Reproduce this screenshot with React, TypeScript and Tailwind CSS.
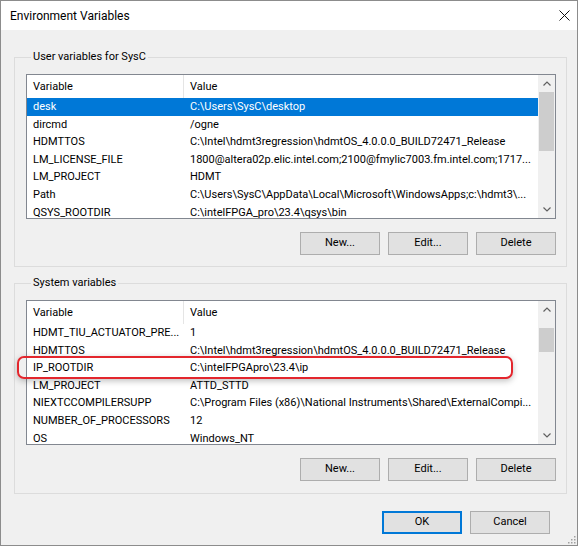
import React from 'react';

type Row = { name: string; value: string };

const userRows: Row[] = [
  { name: 'desk', value: 'C:\\Users\\SysC\\desktop' },
  { name: 'dircmd', value: '/ogne' },
  { name: 'HDMTTOS', value: 'C:\\Intel\\hdmt3regression\\hdmtOS_4.0.0.0_BUILD72471_Release' },
  { name: 'LM_LICENSE_FILE', value: '1800@altera02p.elic.intel.com;2100@fmylic7003.fm.intel.com;1717...' },
  { name: 'LM_PROJECT', value: 'HDMT' },
  { name: 'Path', value: 'C:\\Users\\SysC\\AppData\\Local\\Microsoft\\WindowsApps;c:\\hdmt3\\...' },
  { name: 'QSYS_ROOTDIR', value: 'C:\\intelFPGA_pro\\23.4\\qsys\\bin' },
];

const systemRows: Row[] = [
  { name: 'HDMT_TIU_ACTUATOR_PRE...', value: '1' },
  { name: 'HDMTTOS', value: 'C:\\Intel\\hdmt3regression\\hdmtOS_4.0.0.0_BUILD72471_Release' },
  { name: 'IP_ROOTDIR', value: 'C:\\intelFPGApro\\23.4\\ip' },
  { name: 'LM_PROJECT', value: 'ATTD_STTD' },
  { name: 'NIEXTCCOMPILERSUPP', value: 'C:\\Program Files (x86)\\National Instruments\\Shared\\ExternalCompi...' },
  { name: 'NUMBER_OF_PROCESSORS', value: '12' },
  { name: 'OS', value: 'Windows_NT' },
];

function Chevron({ up }: { up?: boolean }) {
  return (
    <svg width="8" height="5" viewBox="0 0 8 5">
      <path
        d={up ? 'M0.5 4.5 L4 1 L7.5 4.5' : 'M0.5 0.5 L4 4 L7.5 0.5'}
        fill="none"
        stroke="#606060"
        strokeWidth="1.2"
      />
    </svg>
  );
}

function WinButton({ children, primary }: { children: React.ReactNode; primary?: boolean }) {
  return (
    <button
      className={`w-[80px] h-[23px] bg-[#e1e1e1] text-[11px] text-black ${
        primary ? 'border-2 border-[#0078d7]' : 'border border-[#adadad]'
      }`}
    >
      {children}
    </button>
  );
}

function VarList({
  rows,
  selected,
  thumbTop,
  thumbHeight,
}: {
  rows: Row[];
  selected?: number;
  thumbTop: number;
  thumbHeight: number;
}) {
  return (
    <div className="w-[530px] h-[145px] border border-[#828790] bg-white flex overflow-hidden">
      <div className="flex-1 min-w-0 flex flex-col">
        <div className="h-[23px] flex shrink-0">
          <div className="w-[157px] pl-[6px] pt-[1px] flex items-center border-r border-[#e5e5e5]">Variable</div>
          <div className="flex-1 pl-[6px] pt-[1px] flex items-center">Value</div>
        </div>
        {rows.map((r, i) => (
          <div
            key={r.name + i}
            className={`h-[17.6px] shrink-0 pt-[1px] flex items-center whitespace-nowrap ${
              i === selected ? 'bg-[#0078d7] text-white' : ''
            }`}
          >
            <div className="w-[157px] pl-[6px] overflow-hidden">{r.name}</div>
            <div className="flex-1 min-w-0 pl-[6px] overflow-hidden">{r.value}</div>
          </div>
        ))}
      </div>
      <div className="w-[17px] bg-[#f0f0f0] flex flex-col shrink-0">
        <div className="h-[17px] flex items-center justify-center">
          <Chevron up />
        </div>
        <div className="flex-1 flex flex-col">
          <div className="mx-[1px] bg-[#cdcdcd]" style={{ marginTop: thumbTop, height: thumbHeight }} />
        </div>
        <div className="h-[17px] flex items-center justify-center">
          <Chevron />
        </div>
      </div>
    </div>
  );
}

function GroupBox({ label, top, children }: { label: string; top: string; children: React.ReactNode }) {
  return (
    <fieldset className={`w-[553px] border border-[#dcdcdc] pl-[11px] pr-[10px] ${top}`}>
      <legend className="ml-[5px] px-[2px] leading-[16px]">{label}</legend>
      {children}
    </fieldset>
  );
}

export default function App() {
  return (
    <div className="w-[580px] h-[547px] bg-white font-['Segoe_UI',Roboto,sans-serif] text-[11px] text-black">
      <div className="relative w-[578px] h-[546px] border border-[#8c8c8c] flex flex-col">
        <div className="h-[29px] bg-white flex items-center justify-between pl-[9px] pr-[7px] text-[12px] shrink-0">
          <span>Environment Variables</span>
          <svg width="11" height="11" viewBox="0 0 11 11">
            <path d="M0.5 0.5 L10.5 10.5 M10.5 0.5 L0.5 10.5" stroke="#111" strokeWidth="1" />
          </svg>
        </div>

        <div className="flex-1 bg-[#f0f0f0] flex flex-col pl-[13px] pr-[10px]">
          <div className="mt-[19px]">
            <GroupBox label="User variables for SysC" top="pt-[9px] pb-[11px]">
              <VarList rows={userRows} selected={0} thumbTop={0} thumbHeight={59} />
              <div className="mt-[13px] flex justify-end gap-[8px]">
                <WinButton>New...</WinButton>
                <WinButton>Edit...</WinButton>
                <WinButton>Delete</WinButton>
              </div>
            </GroupBox>
          </div>

          <div className="mt-[8px]">
            <GroupBox label="System variables" top="pt-[9px] pb-[12px]">
              <VarList rows={systemRows} thumbTop={10} thumbHeight={24} />
              <div className="mt-[13px] flex justify-end gap-[8px]">
                <WinButton>New...</WinButton>
                <WinButton>Edit...</WinButton>
                <WinButton>Delete</WinButton>
              </div>
            </GroupBox>
          </div>

          <div className="mt-[17px] w-[553px] flex justify-end gap-[8px] pr-[17px]">
            <WinButton primary>OK</WinButton>
            <WinButton>Cancel</WinButton>
          </div>
        </div>

        {/* red annotation round IP_ROOTDIR */}
        <div className="absolute left-[16px] top-[355px] w-[496px] h-[23px] border-2 border-[#e3262d] rounded-[7px] shadow-[0_2px_6px_rgba(0,0,0,0.25)]" />

        {/* size grip */}
        <svg className="absolute right-[1px] bottom-[1px]" width="10" height="10" viewBox="0 0 10 10">
          {[
            [8, 2], [8, 5], [5, 5], [8, 8], [5, 8], [2, 8],
          ].map(([x, y]) => (
            <rect key={`${x}-${y}`} x={x} y={y} width="1.5" height="1.5" fill="#a0a0a0" />
          ))}
        </svg>
      </div>
    </div>
  );
}
